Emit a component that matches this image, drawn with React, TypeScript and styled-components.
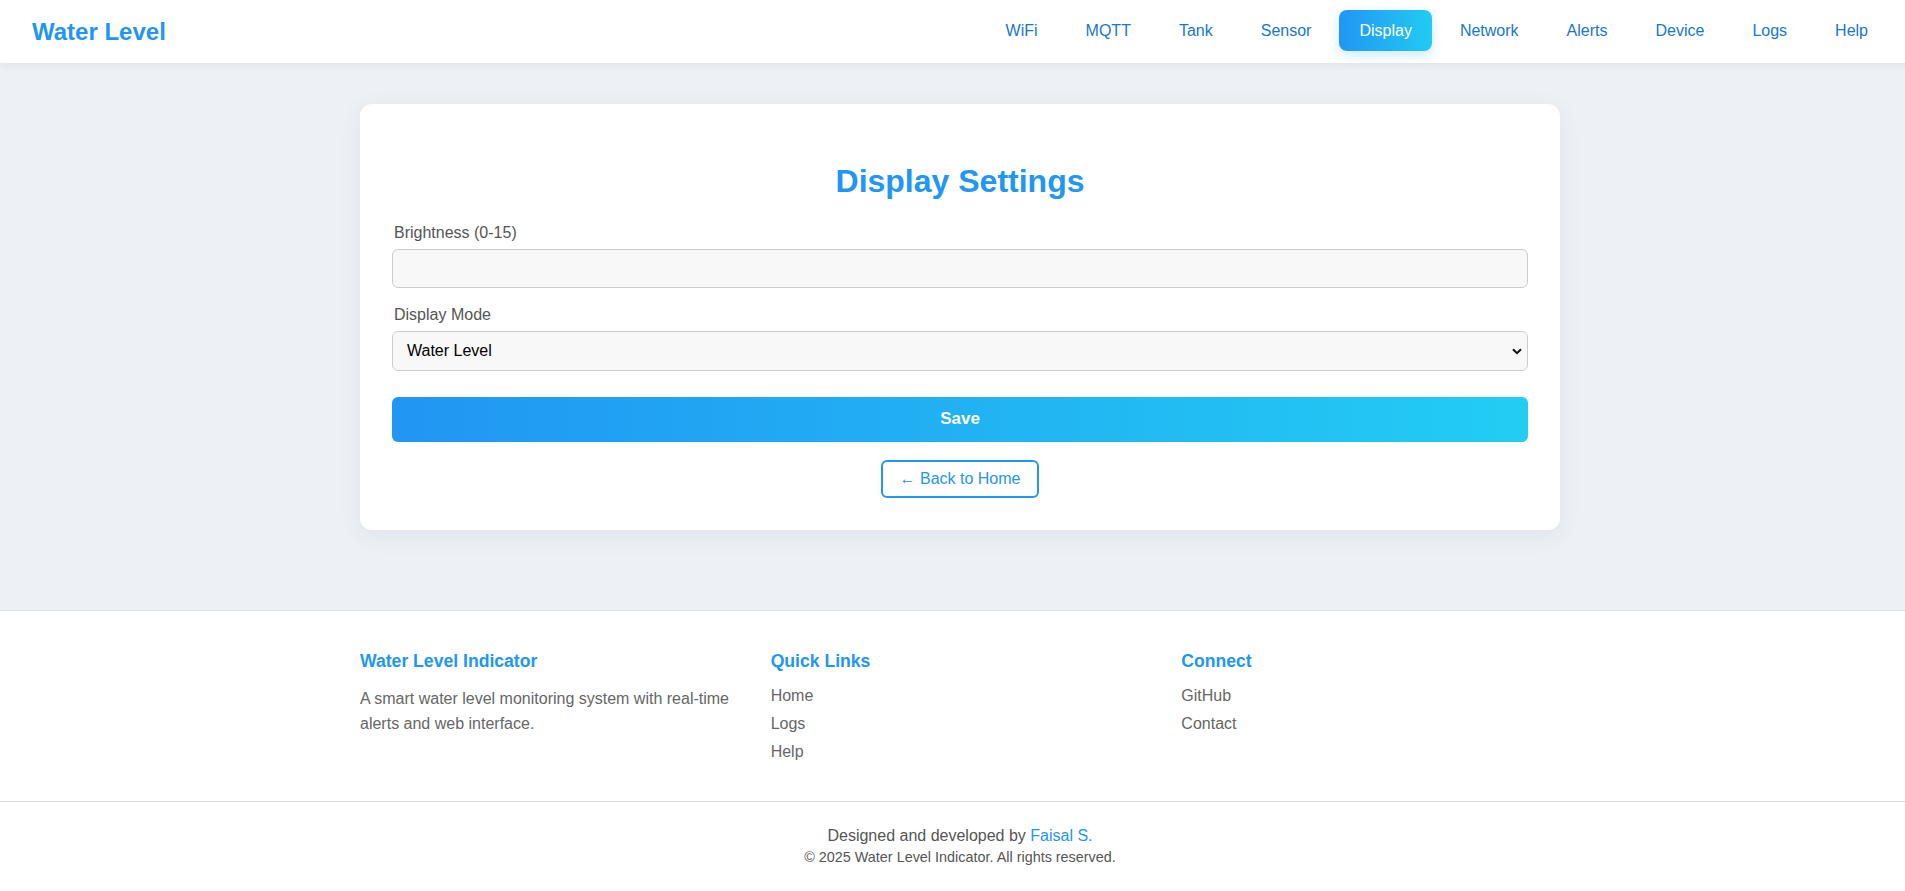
import React from "react";
import styled, { createGlobalStyle } from "styled-components";

const GlobalStyle = createGlobalStyle`
  html, body { margin: 0; padding: 0; overflow-x: hidden; }
  body {
    width: 1920px;
    font-family: "Liberation Sans", Arial, Helvetica, sans-serif;
    background: #ffffff;
    color: #333;
  }
  * { box-sizing: border-box; }
`;

const Page = styled.div`
  width: 1920px;
  display: flex;
  flex-direction: column;
`;

const Header = styled.header`
  height: 63px;
  background: #ffffff;
  display: flex;
  align-items: center;
  justify-content: space-between;
  padding: 0 32px;
  box-shadow: 0 2px 8px rgba(0, 0, 0, 0.06);
  position: relative;
  z-index: 1;
`;

const Logo = styled.div`
  font-size: 24px;
  font-weight: 700;
  color: #2196f3;
  line-height: 28px;
`;

const Nav = styled.nav`
  display: flex;
  align-items: center;
  gap: 8px;
  margin-top: -2px;
`;

const NavLink = styled.a<{ $active?: boolean }>`
  display: block;
  padding: 11px 20px;
  font-size: 16px;
  line-height: 19px;
  border-radius: 8px;
  text-decoration: none;
  color: ${(p) => (p.$active ? "#ffffff" : "#1976d2")};
  background: ${(p) =>
    p.$active ? "linear-gradient(90deg, #2196f3 0%, #21cbf3 100%)" : "transparent"};
  box-shadow: ${(p) => (p.$active ? "0 4px 12px rgba(33, 150, 243, 0.22)" : "none")};
`;

const Main = styled.main`
  background: #edf1f6;
  padding: 41px 0 80px;
`;

const Card = styled.section`
  width: 1200px;
  margin: 0 auto;
  background: #ffffff;
  border-radius: 12px;
  padding: 32px;
  box-shadow: 0 6px 24px rgba(30, 50, 90, 0.07);
  display: flex;
  flex-direction: column;
`;

const Title = styled.h2`
  margin: 26.5px 0 24px;
  font-size: 32px;
  font-weight: 700;
  text-align: center;
  color: #2196f3;
`;

const FormGroup = styled.div`
  margin-bottom: 18px;
`;

const Label = styled.label`
  display: block;
  font-size: 16px;
  line-height: 18px;
  color: #555;
  margin: 0 0 7px 2px;
`;

const TextInput = styled.input`
  display: block;
  width: 100%;
  height: 39px;
  padding: 0 12px;
  font-size: 16px;
  font-family: inherit;
  background: #f8f8f8;
  border: 1px solid #cccccc;
  border-radius: 6px;
  outline: none;
`;

const SelectWrap = styled.div`
  position: relative;
`;

const Select = styled.select`
  display: block;
  width: 100%;
  height: 40px;
  padding: 0 30px 0 14px;
  font-size: 16px;
  font-family: inherit;
  color: #000;
  background: #f8f8f8;
  border: 1px solid #cccccc;
  border-radius: 6px;
  outline: none;
  appearance: none;
  -webkit-appearance: none;
`;

const Chevron = styled.svg`
  position: absolute;
  right: 6px;
  top: 50%;
  width: 10px;
  height: 7px;
  margin-top: -3px;
  pointer-events: none;
`;

const SaveButton = styled.button`
  margin-top: 8px;
  width: 100%;
  height: 45px;
  border: none;
  border-radius: 6px;
  font-family: inherit;
  font-size: 17px;
  font-weight: 700;
  color: #ffffff;
  background: linear-gradient(90deg, #2196f3 0%, #22cdf3 100%);
  cursor: pointer;
`;

const BackLink = styled.a`
  align-self: center;
  margin-top: 18px;
  padding: 8px 17px;
  border: 2px solid #2196f3;
  border-radius: 6px;
  color: #2196f3;
  font-size: 16px;
  line-height: 18px;
  text-decoration: none;
  background: #fff;
`;

const Footer = styled.footer`
  background: #ffffff;
  border-top: 1px solid #dfe3e8;
`;

const FooterGrid = styled.div`
  width: 1200px;
  margin: 0 auto;
  display: grid;
  grid-template-columns: repeat(3, 1fr);
  gap: 32px;
  padding: 40px 0 31px;
`;

const FooterCol = styled.div``;

const FooterHeading = styled.h3`
  margin: 0 0 14px;
  font-size: 17.6px;
  font-weight: 700;
  color: #2196f3;
`;

const FooterText = styled.p`
  margin: 0;
  font-size: 16px;
  line-height: 1.6;
  color: #666;
`;

const LinkList = styled.ul`
  list-style: none;
  margin: 0;
  padding: 0;
`;

const LinkItem = styled.li`
  font-size: 16px;
  line-height: 20px;
  margin-bottom: 8px;
  color: #666;
`;

const FooterBottom = styled.div`
  border-top: 1px solid #dddddd;
  padding: 24px 0;
  text-align: center;
`;

const Credit = styled.p`
  margin: 0;
  font-size: 16px;
  line-height: 20px;
  color: #555;
`;

const Accent = styled.span`
  color: #2196f3;
`;

const Copyright = styled.p`
  margin: 1px 0 0;
  font-size: 14.4px;
  line-height: 20px;
  color: #555;
`;

const navItems = ["WiFi", "MQTT", "Tank", "Sensor", "Display", "Network", "Alerts", "Device", "Logs", "Help"];

export default function App() {
  return (
    <Page>
      <GlobalStyle />
      <Header>
        <Logo>Water Level</Logo>
        <Nav>
          {navItems.map((n) => (
            <NavLink key={n} href="#" $active={n === "Display"}>
              {n}
            </NavLink>
          ))}
        </Nav>
      </Header>
      <Main>
        <Card>
          <Title>Display Settings</Title>
          <FormGroup>
            <Label>Brightness (0-15)</Label>
            <TextInput type="text" />
          </FormGroup>
          <FormGroup>
            <Label>Display Mode</Label>
            <SelectWrap>
              <Select defaultValue="water">
                <option value="water">Water Level</option>
                <option value="percent">Percentage</option>
              </Select>
              <Chevron viewBox="0 0 10 7">
                <path d="M1 1.2 L5 5.2 L9 1.2" fill="none" stroke="#111" strokeWidth="2" />
              </Chevron>
            </SelectWrap>
          </FormGroup>
          <SaveButton>Save</SaveButton>
          <BackLink href="#">← Back to Home</BackLink>
        </Card>
      </Main>
      <Footer>
        <FooterGrid>
          <FooterCol>
            <FooterHeading>Water Level Indicator</FooterHeading>
            <FooterText>A smart water level monitoring system with real-time alerts and web interface.</FooterText>
          </FooterCol>
          <FooterCol>
            <FooterHeading>Quick Links</FooterHeading>
            <LinkList>
              <LinkItem>Home</LinkItem>
              <LinkItem>Logs</LinkItem>
              <LinkItem>Help</LinkItem>
            </LinkList>
          </FooterCol>
          <FooterCol>
            <FooterHeading>Connect</FooterHeading>
            <LinkList>
              <LinkItem>GitHub</LinkItem>
              <LinkItem>Contact</LinkItem>
            </LinkList>
          </FooterCol>
        </FooterGrid>
        <FooterBottom>
          <Credit>
            Designed and developed by <Accent>Faisal S.</Accent>
          </Credit>
          <Copyright>© 2025 Water Level Indicator. All rights reserved.</Copyright>
        </FooterBottom>
      </Footer>
    </Page>
  );
}
